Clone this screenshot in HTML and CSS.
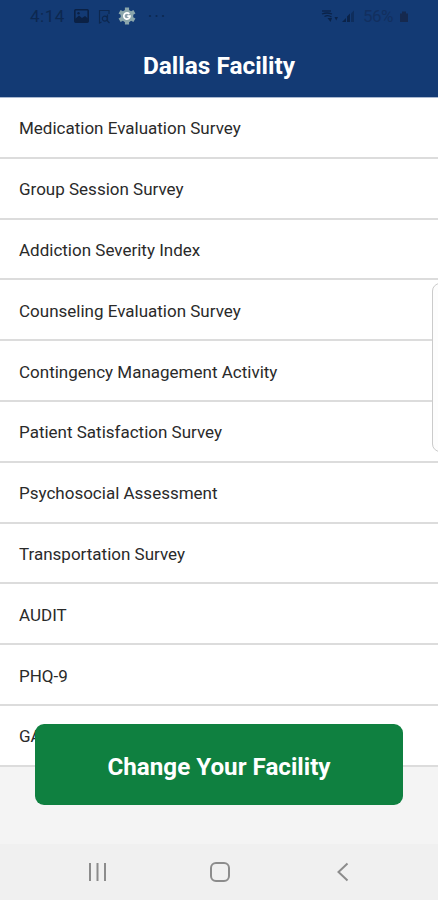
FILE: index.html
```html
<!DOCTYPE html>
<html lang="en">
<head>
<meta charset="UTF-8">
<meta name="viewport" content="width=device-width, initial-scale=1.0">
<title>Dallas Facility</title>
<link rel="stylesheet" href="styles.css">
</head>
<body>

<div class="screen">
  <header class="header">
    <div class="status-bar">
      <div class="status-left">
        <span class="time">4:14</span>
        <svg class="icon-picture" width="15" height="14" viewBox="0 0 15 14">
          <rect x="0.8" y="0.8" width="13.4" height="12.4" rx="1" fill="none" stroke="#0b2145" stroke-width="1.6"/>
          <path d="M1 10 L5 6.500 L8 9 L11 7 L14 9.500 V13 H1 Z" fill="#0b2145"/>
          <circle cx="4.500" cy="4.300" r="1.200" fill="#0b2145"/>
        </svg>
        <svg class="icon-file" width="13" height="15" viewBox="0 0 13 15">
          <path d="M3.500 13 L1.500 14 V1.500 H11 V5" fill="none" stroke="#0d2850" stroke-width="1.200"/>
          <circle cx="6.800" cy="9.600" r="2.500" fill="none" stroke="#0d2850" stroke-width="1.200"/>
          <path d="M9.500 5.500 V12 L11.500 14" fill="none" stroke="#0d2850" stroke-width="1.200"/>
        </svg>
        <svg class="icon-gear" width="18" height="18" viewBox="0 0 18 18">
          <g stroke="#8ba6ac" stroke-width="4.200">
            <path d="M9 0.500 V17.500"/>
            <path d="M1.600 4.750 L16.400 13.250"/>
            <path d="M1.600 13.250 L16.400 4.750"/>
          </g>
          <circle cx="9" cy="9" r="6.300" fill="#8ba6ac"/>
          <circle cx="9" cy="9" r="3.600" fill="#8ba0ac"/>
          <path d="M11.300 7 A3.100 3.100 0 1 0 12 9.200 H9.300" fill="none" stroke="#fff" stroke-width="1.700"/>
        </svg>
        <svg class="icon-more" width="17" height="4" viewBox="0 0 17 4">
          <g fill="#0d2850">
            <circle cx="2" cy="2" r="1.100"/>
            <circle cx="8.500" cy="2" r="1.100"/>
            <circle cx="15" cy="2" r="1.100"/>
          </g>
        </svg>
      </div>
      <div class="status-right">
        <svg width="18" height="14" viewBox="0 0 18 14">
          <g fill="none" stroke="#0b2349" stroke-width="1.300">
            <path d="M1 2 H10"/>
            <path d="M1 5 Q6 3 11 5"/>
            <path d="M3.500 7.500 Q7 5.500 10.500 8"/>
          </g>
          <path d="M6.500 9 H11 L9.500 13 Z M13.500 8 H17 L15.200 11.500 Z" fill="#0b2349"/>
        </svg>
        <svg width="13" height="12" viewBox="0 0 13 12">
          <path d="M0 12 L4 8 V12 Z M5 12 V6.500 L8 3.500 V12 Z" fill="#0b2349"/>
          <path d="M9 12 V3.500 L12 0.500 V12 Z" fill="#0e2d5c"/>
        </svg>
        <span class="battery-text">56%</span>
        <svg width="10" height="13" viewBox="0 0 10 13">
          <path d="M3 3.500 V1.500 H7 V3.500 H9 V12 H1 V3.500 Z" fill="#15294f"/>
        </svg>
      </div>
    </div>
    <h1 class="title">Dallas Facility</h1>
  </header>

  <ul class="survey-list">
    <li>Medication Evaluation Survey</li>
    <li>Group Session Survey</li>
    <li>Addiction Severity Index</li>
    <li>Counseling Evaluation Survey</li>
    <li>Contingency Management Activity</li>
    <li>Patient Satisfaction Survey</li>
    <li>Psychosocial Assessment</li>
    <li>Transportation Survey</li>
    <li>AUDIT</li>
    <li>PHQ-9</li>
    <li>GAD-7</li>
  </ul>

  <div class="edge-panel"></div>
  <button type="button" class="change-button">Change Your Facility</button>

  <nav class="nav-bar">
    <svg width="20" height="20" viewBox="0 0 20 20">
      <path d="M3 1 V19 M10.500 1 V19 M18 1 V19" stroke="#8c8c8c" stroke-width="2"/>
    </svg>
    <svg width="20" height="20" viewBox="0 0 20 20">
      <rect x="1" y="1" width="18" height="18" rx="5" fill="none" stroke="#8c8c8c" stroke-width="2"/>
    </svg>
    <svg width="20" height="20" viewBox="0 0 20 20">
      <path d="M14.500 1.500 L5.500 10 L14.500 18.500" fill="none" stroke="#8c8c8c" stroke-width="2"/>
    </svg>
  </nav>
</div>

</body>
</html>
```

FILE: styles.css
```css
* {
  box-sizing: border-box;
}
body {
  margin: 0;
  font-family: Roboto, "Liberation Sans", sans-serif;
}
.screen {
  position: relative;
  display: flex;
  flex-direction: column;
  width: 438px;
  height: 900px;
  overflow: hidden;
  background-color: #f4f4f4;
}
.header {
  height: 98px;
  flex-shrink: 0;
  border-bottom: 1px solid #a9b8d0;
  background-color: #133a74;
}
.status-bar {
  display: flex;
  justify-content: space-between;
  height: 32px;
  padding: 0 28px 0 30px;
}
.status-left,
.status-right {
  display: flex;
  align-items: center;
}
.time {
  width: 44px;
  font-size: 17px;
  letter-spacing: 0.5px;
  color: #0d2850;
}
.icon-file {
  margin-left: 9px;
}
.icon-gear {
  margin-left: 7px;
}
.icon-more {
  margin-left: 12px;
}
.status-right {
  gap: 3px;
  padding-right: 1px;
}
.battery-text {
  width: 38px;
  padding-left: 5px;
  font-size: 17px;
  letter-spacing: -0.5px;
  color: #122f5f;
}
.title {
  margin: 18px 0 0;
  font-size: 24.4px;
  line-height: 32px;
  font-weight: 700;
  text-align: center;
  color: #fff;
}
.survey-list {
  margin: 0;
  padding: 0;
  list-style: none;
}
.survey-list li {
  display: flex;
  align-items: center;
  height: 60.8px;
  padding: 2px 19px 0;
  border-bottom: 2px solid #dcdcdc;
  background-color: #fff;
  font-size: 17px;
  color: #2a2a2a;
}
/* handle that peeks in over the list */
.edge-panel {
  position: absolute;
  top: 283px;
  right: -12px;
  width: 18px;
  height: 169px;
  border: 1px solid #cbcbcb;
  border-radius: 8px;
  background-color: #fdfdfd;
}
.change-button {
  position: absolute;
  left: 35px;
  top: 724px;
  width: 368px;
  height: 81px;
  padding: 4px 0 0;
  border: none;
  border-radius: 9px;
  background-color: #0f8040;
  font-family: inherit;
  font-size: 24.2px;
  font-weight: 700;
  color: #fff;
}
.nav-bar {
  display: flex;
  align-items: center;
  justify-content: space-between;
  height: 56px;
  margin-top: auto;
  padding: 0 85px 0 87px;
  background-color: #f0f0f0;
}
```
